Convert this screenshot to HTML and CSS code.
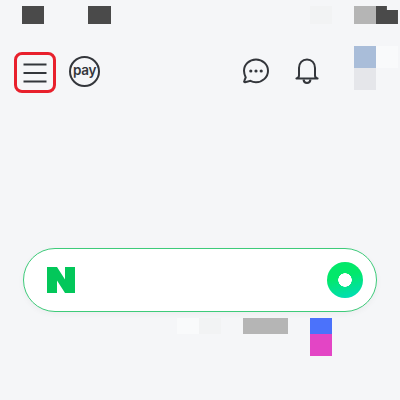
FILE: index.html
```html
<!DOCTYPE html>
<html lang="ko">
<head>
  <meta charset="UTF-8" />
  <title>NAVER</title>
  <link rel="stylesheet" href="styles.css">
</head>
<body>
  <div class="mosaic top-row">
    <i class="tile dark c2"></i>
    <i class="tile dark c5"></i>
    <i class="tile faint c15"></i>
    <i class="tile gray c17"></i>
    <i class="tile notch c18"></i>
  </div>

  <header class="header">
    <button class="menu-btn" aria-label="menu">
      <svg width="24" height="20" viewBox="0 0 24 20"><path d="M.5 1.500h23M.5 10h23M.5 18.500h23" fill="none" stroke="#33363b" stroke-width="2"/></svg>
    </button>
    <div class="pay-badge">pay</div>
    <div class="header-right">
      <svg class="icon" width="28" height="28" viewBox="0 0 28 28">
        <path d="M14 2.500c6.600 0 12 5 12 11.300s-5.400 11.400-12 11.400c-2 0-3.900-.4-5.500-1.300l-5.400 1.300c-.8.100-1.200-.5-.9-1.100l1.500-3.700C2.900 18.600 2 16.300 2 13.800 2 7.500 7.400 2.500 14 2.500z" fill="none" stroke="#33363b" stroke-width="2"/>
        <circle cx="8.800" cy="14" r="1.600" fill="#33363b"/><circle cx="14" cy="14" r="1.600" fill="#33363b"/><circle cx="19.200" cy="14" r="1.600" fill="#33363b"/>
      </svg>
      <svg class="icon bell" width="26" height="28" viewBox="0 0 26 28">
        <path d="M13 2.500c-4.800 0-8 3.600-8 8.500v7.500c0 1.600-1 2.600-2.600 3h21.200c-1.600-.4-2.600-1.400-2.600-3V11c0-4.900-3.200-8.500-8-8.500z" fill="none" stroke="#33363b" stroke-width="2" stroke-linejoin="round"/>
        <path d="M9.500 22.500c.3 2.200 1.700 3.500 3.500 3.500s3.200-1.300 3.500-3.500" fill="none" stroke="#33363b" stroke-width="2"/>
      </svg>
      <div class="mosaic side">
        <i class="tile blue"></i>
        <i class="tile whiteish"></i>
        <i class="tile pale"></i>
      </div>
    </div>
  </header>

  <div class="search-box">
    <svg class="logo-n" width="28" height="26" viewBox="0 0 28 26" aria-label="NAVER"><path d="M0 0h10l8 12.500V0h10v26H18L10 13.500V26H0z" fill="#03c75a"/></svg>
    <span class="search-dot"></span>
  </div>

  <div class="mosaic bottom-row">
    <i class="tile whiteish c9"></i>
    <i class="tile faint c10"></i>
    <i class="tile gray c12"></i>
    <i class="tile blue2 c15"></i>
  </div>
  <div class="mosaic pink-row">
    <i class="tile pink c15"></i>
  </div>
</body>
</html>
```

FILE: styles.css
```css
* {
  box-sizing: border-box;
}
html, body {
  height: 100%;
}
body {
  margin: 0;
  background: #f5f6f8;
  font-family: "Noto Sans", sans-serif;
  overflow: hidden;
}

/* blurred placeholder tiles sit on a grid of about 22px */
.mosaic {
  display: grid;
  grid-template-columns: repeat(18, 22.12px);
}
.top-row {
  margin-top: 6px;
  height: 18px;
}
.bottom-row {
  margin-top: 6px;
  height: 16px;
}
.pink-row {
  height: 22px;
}
.tile {
  display: block;
}
.c2 { grid-column: 2; }
.c5 { grid-column: 5; }
.c9 { grid-column: 9; }
.c10 { grid-column: 10; }
.c12 { grid-column: 12 / span 2; margin-right: -1px; }
.c15 { grid-column: 15; }
.c17 { grid-column: 17; }
.c18 { grid-column: 18; }
.dark { background: #4a4a4a; }
.faint { background: #f2f3f4; }
.gray { background: #b5b5b5; }
.notch {
  background: #4a4a4a;
  clip-path: polygon(0 0, 50% 0, 50% 22%, 100% 22%, 100% 100%, 0 100%);
}
.blue { background: #a9bdd9; }
.blue2 { background: #4b72fb; }
.whiteish { background: #f9fafb; }
.pale { background: #e5e6ea; }
.pink { background: #e345c5; }

.header {
  display: flex;
  height: 44px;
  margin-top: 22px;
  padding-left: 14px;
}
.menu-btn {
  width: 42px;
  height: 41px;
  margin-top: 6px;
  padding: 0;
  display: flex;
  align-items: center;
  justify-content: center;
  background: transparent;
  border: 3px solid #e8202c;
  border-radius: 8px;
}
.pay-badge {
  width: 31px;
  height: 31px;
  margin: 10px 0 0 13px;
  border: 2px solid #33363b;
  border-radius: 50%;
  color: #33363b;
  font-family: Inter, sans-serif;
  font-size: 13.5px;
  font-weight: 600;
  line-height: 25px;
  text-align: center;
  letter-spacing: -0.3px;
}
.header-right {
  display: flex;
  margin-left: auto;
  padding-right: 2px;
}
.icon {
  margin-top: 11px;
}
.bell {
  margin-left: 24px;
  margin-right: 34px;
}
.side {
  grid-template-columns: 22px 22px;
  grid-auto-rows: 22px;
}
.search-box {
  display: flex;
  align-items: center;
  justify-content: space-between;
  height: 64px;
  margin: 158px 23px 0;
  padding: 0 13px 0 23px;
  background: #fff;
  border: 1px solid #3ecb7a;
  border-radius: 32px;
  box-shadow: 0 2px 6px rgba(0, 0, 0, 0.04);
}
.search-dot {
  width: 36px;
  height: 36px;
  border-radius: 50%;
  background: radial-gradient(circle at center, #fff 0 6.5px, transparent 7px), linear-gradient(165deg, #03e86a 40%, #00dcc0 100%);
}
```
